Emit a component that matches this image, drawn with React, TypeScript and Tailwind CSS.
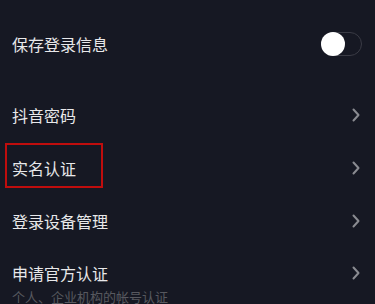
import React from 'react';

function Chevron() {
  return (
    <svg width="8" height="14" viewBox="0 0 8 14" fill="none" className="shrink-0">
      <path d="M1.5 1.5 L6.5 7 L1.5 12.5" stroke="#8a8b91" strokeWidth="2" strokeLinecap="round" strokeLinejoin="round" />
    </svg>
  );
}

function Toggle() {
  return (
    <div className="relative w-[41px] h-[24px] rounded-full border-[1.5px] border-[#3a3b45] bg-[#161823]">
      <div className="absolute left-[-1.5px] top-[-1.5px] w-[24px] h-[24px] rounded-full bg-white" />
    </div>
  );
}

export default function App() {
  const font = { fontFamily: '"Noto Sans CJK SC", "Noto Sans", sans-serif' };
  return (
    <div className="w-[375px] h-[304px] overflow-hidden bg-[#161823] pt-[18px]" style={font}>
      {/* 保存登录信息 */}
      <div className="flex items-center justify-between h-[52px] pl-[12px] pr-[13px] mb-[18px]">
        <span className="text-[16px] leading-[22px] text-[#e8e8ea]">保存登录信息</span>
        <Toggle />
      </div>

      <div className="flex items-center justify-between h-[53px] pl-[12px] pr-[15px]">
        <span className="text-[16px] leading-[22px] text-[#e8e8ea]">抖音密码</span>
        <Chevron />
      </div>

      <div className="relative flex items-center justify-between h-[53px] pl-[12px] pr-[15px]">
        <span className="text-[16px] leading-[22px] text-[#e8e8ea]">实名认证</span>
        <Chevron />
        {/* 标注框 */}
        <div className="absolute left-[5px] top-[2px] w-[98px] h-[45px] border-2 border-[#c00d0d]" />
      </div>

      <div className="flex items-center justify-between h-[53px] pl-[12px] pr-[15px]">
        <span className="text-[16px] leading-[22px] text-[#e8e8ea]">登录设备管理</span>
        <Chevron />
      </div>

      <div className="pt-[15px] pl-[12px] pr-[15px]">
        <div className="flex items-center justify-between">
          <span className="text-[16px] leading-[22px] text-[#e8e8ea]">申请官方认证</span>
          <Chevron />
        </div>
        <div className="mt-[4px] text-[13px] leading-[18px] text-[#57585f]">个人、企业机构的帐号认证</div>
      </div>
    </div>
  );
}
